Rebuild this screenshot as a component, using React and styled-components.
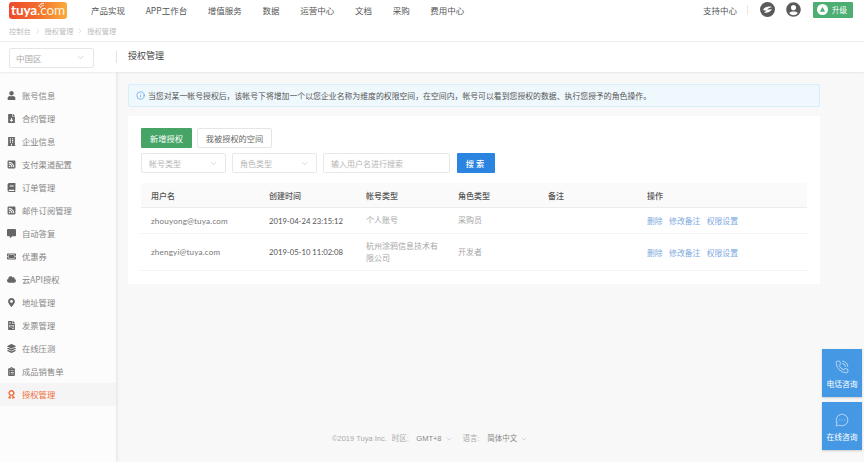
import React from "react";
import styled, { createGlobalStyle } from "styled-components";
import { ChevronDown, ChevronRight, Info, PhoneCall, MessageCircleMore } from "lucide-react";
import {
  FaUser, FaBuilding, FaRssSquare, FaBook, FaCommentAlt, FaTicketAlt, FaCloud,
  FaMapMarkerAlt, FaFileInvoice, FaLayerGroup, FaClipboardList, FaAward, FaUserCircle, FaFileDownload,
} from "react-icons/fa";

const Global = createGlobalStyle`
  * { box-sizing: border-box; }
  html, body { margin: 0; padding: 0; background: #f8f8f8; }
  body { font-family: "Noto Sans CJK SC", "Noto Sans", "Liberation Sans", sans-serif; }
`;

const Page = styled.div`
  width: 864px; height: 462px; position: relative; overflow: hidden;
  display: flex; flex-direction: column; background: #f8f8f8;
`;
const TopArea = styled.header`
  height: 42px; background: #fff; border-bottom: 1px solid #eee; padding-left: 9px;
  display: flex; flex-direction: column;
`;
const TopRow = styled.div`display: flex; align-items: flex-start; height: 23px; padding-top: 2px;`;
const Logo = styled.div`
  width: 58px; height: 17px; border-radius: 3px; position: relative;
  background: linear-gradient(90deg, #ee4a2c 0%, #f2682c 45%, #f9ab3c 100%);
  color: #fff; font: 700 13.5px/16px "Lato", sans-serif; text-align: center; letter-spacing: -0.1px;
`;
const LogoCom = styled.span`font-weight: 400; color: #fff3dc;`;
const LogoWave = styled.svg`position: absolute; left: 29px; top: 0; width: 8px; height: 7px;`;
const Nav = styled.nav`display: flex; gap: 20.7px; margin-left: 24px; height: 17px; align-items: center;`;
const NavItem = styled.span`font-size: 8.5px; line-height: 17px; color: #555; white-space: nowrap;`;
const TopRight = styled.div`display: flex; align-items: center; margin-left: auto; height: 17px; margin-right: 11px; margin-top: -1px;`;
const Support = styled.span`font-size: 8.5px; color: #555; padding-right: 10px; border-right: 1px solid #e8e8e8; line-height: 10px;`;
const RoundIcon = styled.span`
  display: flex; margin-left: ${(p) => p.$ml}px; color: #5a5a5a; width: 15px; height: 15px;
`;
const Upgrade = styled.span`
  display: flex; align-items: center; gap: 4px; margin-left: 12px; width: 40px; height: 16px;
  padding-left: 4px; background: #4cae72; color: #fff; font-size: 7.5px; border-radius: 1px;
`;
const UpgradeDot = styled.span`
  width: 11px; height: 11px; border-radius: 50%; background: #fff; display: flex; align-items: center; justify-content: center;
`;
const Crumbs = styled.div`display: flex; align-items: center; gap: 3px; font-size: 7.2px; color: #bdbdbd; line-height: 13px; margin-top: 1.5px;`;

const TitleBar = styled.div`
  height: 30px; background: #fff; box-shadow: 0 1px 2px rgba(0,0,0,.07); position: relative; z-index: 2;
  display: flex; align-items: center; padding-left: 9px;
`;
const Region = styled.div`
  width: 85px; height: 20px; border: 1px solid #e6e6e6; border-radius: 2px; color: #aaa; font-size: 8.5px;
  display: flex; align-items: center; justify-content: space-between; padding: 0 8px 0 6px;
  margin-top: 1px;
`;
const TitleDivider = styled.span`width: 1px; height: 12px; background: #e2e2e2; margin: 0 11px 0 22px;`;
const Title = styled.h1`margin: 0; font-size: 9px; font-weight: 400; color: #444; margin-top: -3px;`;

const Body = styled.div`flex: 1; display: flex; min-height: 0;`;
const Sidebar = styled.aside`
  width: 116px; background: #fcfcfc; box-shadow: 1px 0 3px rgba(0,0,0,.09); padding-top: 11.5px; flex: none;
`;
const SideItem = styled.div`
  height: 23px; display: flex; align-items: center; padding-left: 7px; gap: 6px; font-size: 8.3px;
  color: ${(p) => (p.$active ? "#f0703c" : "#858585")};
  background: ${(p) => (p.$active ? "#f5f5f5" : "transparent")};
`;
const SideIcon = styled.span`
  width: 9px; height: 10px; display: flex; align-items: center; justify-content: center; font-size: 9px;
  color: ${(p) => (p.$active ? "#f0703c" : "#666")};
`;
const Main = styled.main`flex: 1; padding: 12px 44px 0 12px; display: flex; flex-direction: column;`;
const Alert = styled.div`
  height: 23px; background: #eff8fd; border: 1px solid #d8eefb; border-radius: 2px; display: flex; align-items: center;
  padding-left: 7px; gap: 3px; font-size: 7.87px; color: #555; white-space: nowrap;
`;
const Card = styled.section`background: #fff; margin-top: 9px; height: 168px; padding: 12px 13px 0;`;
const ButtonRow = styled.div`display: flex; gap: 5px;`;
const PrimaryBtn = styled.button`
  height: 20px; width: 51px; padding: 0; border: 0; border-radius: 1px; background: #46a566; color: #fff;
  font: 8.2px "Noto Sans CJK SC", sans-serif;
`;
const GhostBtn = styled.button`
  height: 20px; width: 75px; padding: 0; background: #fff; border: 1px solid #e6e6e6; border-radius: 2px; color: #666;
  font: 8.2px "Noto Sans CJK SC", sans-serif;
`;
const FilterRow = styled.div`display: flex; gap: 6px; margin-top: 5px; padding-left: 0;`;
const Select = styled.div`
  width: ${(p) => p.$w}px; height: 20px; border: 1px solid #e8e8e8; border-radius: 2px; color: #b5b5b5; font-size: 8px;
  display: flex; align-items: center; justify-content: space-between; padding: 0 7px 0 7px;
`;
const SearchBtn = styled.button`
  width: 38px; height: 20px; margin-left: 1px; padding: 0; border: 0; border-radius: 1px; background: #2a84e0; color: #fff;
  font: 500 8.2px "Noto Sans CJK SC", sans-serif; letter-spacing: 2px;
`;
const Table = styled.div`margin-top: 10px; width: 666px;`;
const Row = styled.div`
  display: grid; grid-template-columns: 118px 97px 92px 90px 99px 1fr; align-items: center; padding-left: 10px;
  height: ${(p) => p.$h}px; font-size: 8px; color: #666;
  background: ${(p) => (p.$head ? "#fafafa" : "#fff")};
  border-bottom: ${(p) => (p.$head ? "1px solid #ececec" : "1px solid #f3f3f3")};
`;
const HeadCell = styled.span`color: #555; font-weight: 500;`;
const Email = styled.span`color: #777; font: 8.1px "Lato", "Noto Sans", sans-serif; letter-spacing: .18px;`;
const Time = styled.span`color: #555; font: 7.7px "Lato", "Noto Sans", sans-serif;`;
const Muted = styled.span`color: #a6a6a6; line-height: 12.5px; padding-right: 14px;`;
const Links = styled.span`display: flex; gap: 6.5px; color: #7da9e0; font-size: 7.8px;`;

const Footer = styled.footer`
  margin-top: auto; height: 29px; padding-left: 204px; display: flex; align-items: flex-start; gap: 5px;
  font-size: 7.5px; color: #aaa; line-height: 11px; white-space: nowrap;
  font-family: "Liberation Sans", "Noto Sans CJK SC", sans-serif;
`;
const FooterPart = styled.span`display: flex; align-items: center; gap: 7.5px; margin-right: ${(p) => p.$mr}px;`;
const FooterValue = styled.span`color: #888; display: flex; align-items: center; gap: 3px;`;

const FloatBtn = styled.div`
  position: absolute; right: 2px; top: ${(p) => p.$top}px; width: 40px; height: 48px; background: #4598e4;
  box-shadow: 0 1px 2px rgba(0,0,0,.18); color: #fff; font-size: 7.8px;
  display: flex; flex-direction: column; align-items: center; padding-top: 11px; gap: 4px;
`;

const Chev = ({ size = 9, color = "#b5b5b5" }) => <ChevronDown size={size} color={color} strokeWidth={1.4} />;

const sideItems = [
  ["账号信息", FaUser], ["合约管理", FaFileDownload], ["企业信息", FaBuilding], ["支付渠道配置", FaRssSquare],
  ["订单管理", FaBook], ["邮件订阅管理", FaRssSquare], ["自动答复", FaCommentAlt], ["优惠券", FaTicketAlt],
  ["云API授权", FaCloud], ["地址管理", FaMapMarkerAlt], ["发票管理", FaFileInvoice], ["在线压测", FaLayerGroup],
  ["成品销售单", FaClipboardList], ["授权管理", FaAward],
];
const navItems = ["产品实现", "APP工作台", "增值服务", "数据", "运营中心", "文档", "采购", "费用中心"];

const Ops = () => (
  <Links><span>删除</span><span>修改备注</span><span>权限设置</span></Links>
);

export default function App() {
  return (
    <Page>
      <Global />
      <TopArea>
        <TopRow>
          <Logo>
            tuya<LogoCom>.com</LogoCom>
            <LogoWave viewBox="0 0 8 7" fill="none" stroke="#fff" strokeWidth="1">
              <path d="M1 5 A4 4 0 0 1 6 1.5" />
              <path d="M2.5 6 A2.5 2.5 0 0 1 5.5 3.5" />
            </LogoWave>
          </Logo>
          <Nav>{navItems.map((n) => <NavItem key={n}>{n}</NavItem>)}</Nav>
          <TopRight>
            <Support>支持中心</Support>
            <RoundIcon $ml={12}>
              <svg viewBox="0 0 15 15" width="15" height="15">
                <circle cx="7.5" cy="7.5" r="7.5" fill="#5a5a5a" />
                <path d="M3 8 C5 4.5 9 4 12 5 C10 5.5 8 6.5 7 7.5 C9 7.5 10.5 7.5 12 7 C10.5 10 7 11.5 4 10.5 C5 10 6 9.2 6.5 8.5 C5.5 8.5 4 8.4 3 8 Z" fill="#fff" />
              </svg>
            </RoundIcon>
            <RoundIcon $ml={11}><FaUserCircle size={15} /></RoundIcon>
            <Upgrade>
              <UpgradeDot>
                <svg viewBox="0 0 8 8" width="7" height="7"><path d="M4 1 L7 6.5 H1 Z" fill="#4cae72" /></svg>
              </UpgradeDot>
              升级
            </Upgrade>
          </TopRight>
        </TopRow>
        <Crumbs>
          <span>控制台</span><ChevronRight size={8} strokeWidth={1.3} />
          <span>授权管理</span><ChevronRight size={8} strokeWidth={1.3} />
          <span>授权管理</span>
        </Crumbs>
      </TopArea>
      <TitleBar>
        <Region>中国区<Chev /></Region>
        <TitleDivider />
        <Title>授权管理</Title>
      </TitleBar>
      <Body>
        <Sidebar>
          {sideItems.map(([label, Icon], i) => {
            const active = i === sideItems.length - 1;
            return (
              <SideItem key={label + i} $active={active}>
                <SideIcon $active={active}><Icon /></SideIcon>
                {label}
              </SideItem>
            );
          })}
        </Sidebar>
        <Main>
          <Alert>
            <Info size={9} color="#3f93e0" strokeWidth={1.6} />
            当您对某一帐号授权后，该帐号下将增加一个以您企业名称为维度的权限空间，在空间内，帐号可以看到您授权的数据、执行您授予的角色操作。
          </Alert>
          <Card>
            <ButtonRow>
              <PrimaryBtn>新增授权</PrimaryBtn>
              <GhostBtn>我被授权的空间</GhostBtn>
            </ButtonRow>
            <FilterRow>
              <Select $w={85}>帐号类型<Chev /></Select>
              <Select $w={85}>角色类型<Chev /></Select>
              <Select $w={127}>输入用户名进行搜索</Select>
              <SearchBtn>搜索</SearchBtn>
            </FilterRow>
            <Table>
              <Row $head $h={25}>
                <HeadCell>用户名</HeadCell><HeadCell>创建时间</HeadCell><HeadCell>帐号类型</HeadCell>
                <HeadCell>角色类型</HeadCell><HeadCell>备注</HeadCell><HeadCell>操作</HeadCell>
              </Row>
              <Row $h={26}>
                <Email>zhouyong@tuya.com</Email><Time>2019-04-24 23:15:12</Time>
                <Muted>个人账号</Muted><Muted>采购员</Muted><span /><Ops />
              </Row>
              <Row $h={37}>
                <Email>zhengyi@tuya.com</Email><Time>2019-05-10 11:02:08</Time>
                <Muted>杭州涂鸦信息技术有限公司</Muted><Muted>开发者</Muted><span /><Ops />
              </Row>
            </Table>
          </Card>
          <Footer>
            <span>©2019 Tuya Inc.</span>
            <FooterPart $mr={5}>时区:<FooterValue>GMT+8 <Chev size={8} /></FooterValue></FooterPart>
            <FooterPart>语言:<FooterValue>简体中文 <Chev size={8} /></FooterValue></FooterPart>
          </Footer>
        </Main>
      </Body>
      <FloatBtn $top={349}><PhoneCall size={14} strokeWidth={1} />电话咨询</FloatBtn>
      <FloatBtn $top={402}><MessageCircleMore size={14} strokeWidth={1} />在线咨询</FloatBtn>
    </Page>
  );
}
